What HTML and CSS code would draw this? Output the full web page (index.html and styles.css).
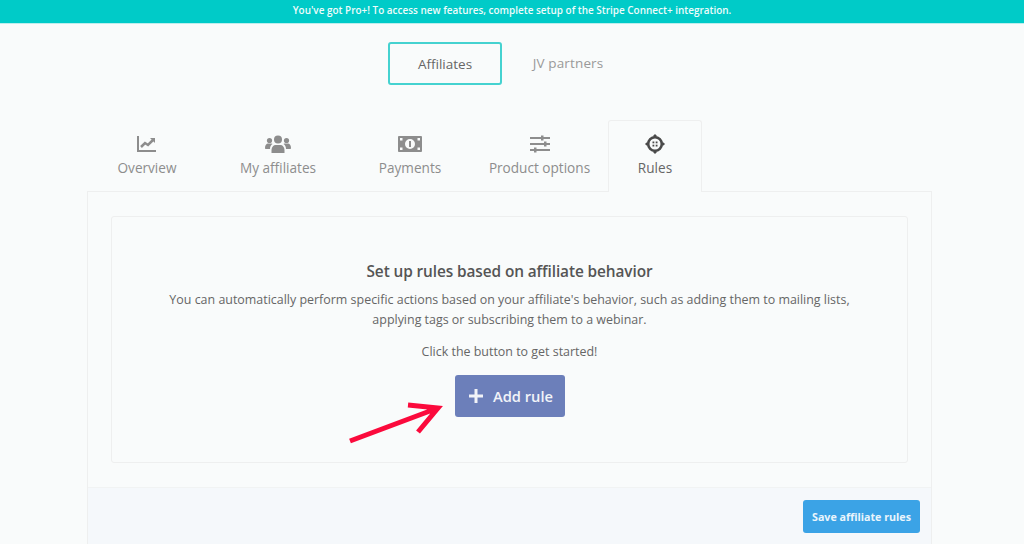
FILE: index.html
```html
<!DOCTYPE html>
<html lang="en">
  <head>
    <meta charset="UTF-8" />
    <meta name="viewport" content="width=device-width, initial-scale=1.0" />
    <title>Affiliate rules</title>
    <link rel="stylesheet" href="styles.css">
  </head>
  <body>
    <div class="banner">You've got Pro+! To access new features, complete setup of the Stripe Connect+ integration.</div>

    <div class="switcher">
      <a class="switch active">Affiliates</a>
      <a class="switch">JV partners</a>
    </div>

    <div class="tabs">
      <a class="tab">
        <svg class="tab-icon" viewBox="0 0 20 18">
          <path d="M1 1v15h18" fill="none" stroke="currentColor" stroke-width="2"/>
          <path d="M4 12l4-4 3 2 5-5" fill="none" stroke="currentColor" stroke-width="2.500"/>
          <path d="M13 3h5v5z" fill="currentColor"/>
        </svg>
        <span>Overview</span>
      </a>
      <a class="tab">
        <svg class="tab-icon" viewBox="0 0 26 18">
          <g fill="currentColor">
            <circle cx="13" cy="4.500" r="4"/>
            <circle cx="4.500" cy="5.500" r="2.600"/>
            <circle cx="21.500" cy="5.500" r="2.600"/>
            <path d="M6.500 18v-3c0-3 2-5 4-5h5c2 0 4 2 4 5v3z"/>
            <path d="M0 13c0-3 1.500-4.500 3-4.500h3.500c.5 0 1 .2 1 .5-1.500 1-2.500 2.500-2.500 5H1c-.6 0-1-.4-1-1z"/>
            <path d="M26 13c0-3-1.500-4.500-3-4.500h-3.500c-.5 0-1 .2-1 .5 1.500 1 2.500 2.500 2.500 5H25c.6 0 1-.4 1-1z"/>
          </g>
        </svg>
        <span>My affiliates</span>
      </a>
      <a class="tab">
        <svg class="tab-icon" viewBox="0 0 24 18">
          <path fill="currentColor" fill-rule="evenodd" d="M1 1h22c.5 0 1 .5 1 1v14c0 .5-.5 1-1 1H1c-.5 0-1-.5-1-1V2c0-.5.5-1 1-1zm11 3a5 5 0 1 0 0 10 5 5 0 0 0 0-10zM2 3v2.500h2.500V3zm17.500 0v2.500H22V3zM2 12.500V15h2.500v-2.500zm17.500 0V15H22v-2.500z"/>
          <rect x="11" y="6" width="2" height="6" fill="currentColor"/>
        </svg>
        <span>Payments</span>
      </a>
      <a class="tab">
        <svg class="tab-icon" viewBox="0 0 20 18">
          <g fill="currentColor">
            <rect y="2" width="20" height="2"/>
            <rect y="8" width="20" height="2"/>
            <rect y="14" width="20" height="2"/>
            <rect x="11" y="0.500" width="2.500" height="5"/>
            <rect x="14" y="6.500" width="2.500" height="5"/>
            <rect x="4" y="12.500" width="2.500" height="5"/>
          </g>
        </svg>
        <span>Product options</span>
      </a>
      <a class="tab current">
        <svg class="tab-icon target" viewBox="0 0 20 20">
          <circle cx="10" cy="10" r="6.800" fill="none" stroke="currentColor" stroke-width="2.600"/>
          <g fill="currentColor">
            <path d="M8.500 4V1.500L10 0l1.500 1.500V4z"/>
            <path d="M8.500 16v2.500L10 20l1.500-1.500V16z"/>
            <path d="M4 8.500H1.500L0 10l1.500 1.500H4z"/>
            <path d="M16 8.500h2.500L20 10l-1.500 1.500H16z"/>
            <rect x="7.500" y="7.500" width="1.800" height="1.800"/>
            <rect x="10.700" y="7.500" width="1.800" height="1.800"/>
            <rect x="7.500" y="10.700" width="1.800" height="1.800"/>
            <rect x="10.700" y="10.700" width="1.800" height="1.800"/>
          </g>
        </svg>
        <span>Rules</span>
      </a>
    </div>

    <div class="panel">
      <div class="panel-body">
        <div class="empty-box">
          <h2>Set up rules based on affiliate behavior</h2>
          <p>You can automatically perform specific actions based on your affiliate's behavior, such as adding them to mailing lists,<br>applying tags or subscribing them to a webinar.</p>
          <p class="hint">Click the button to get started!</p>
          <button class="add-btn">
            <svg class="plus" viewBox="0 0 14 14"><path d="M7 0v14M0 7h14" stroke="currentColor" stroke-width="3"/></svg>
            <span>Add rule</span>
          </button>
        </div>
      </div>
      <div class="panel-footer">
        <button class="save-btn">Save affiliate rules</button>
      </div>
    </div>

    <svg class="arrow" viewBox="0 0 100 44" width="100" height="44">
      <path d="M1 41L89 8M59 5l30 3-20 24" fill="none" stroke="#fb0a3c" stroke-width="5"/>
    </svg>
  </body>
</html>
```

FILE: styles.css
```css
html, body {
  height: 544px;
  overflow: hidden;
}
body {
  position: relative;
  margin: 0;
  background-color: #f9fbfb;
  color: #555;
  font-family: "Open Sans", "Noto Sans", sans-serif;
  font-size: 13px;
}
.banner {
  height: 23px;
  line-height: 21px;
  background: #00cbc8;
  border-bottom: 1px solid #bdeeed;
  color: #eefcfb;
  font-size: 9.950px;
  font-weight: 600;
  text-align: center;
}
.switcher {
  display: flex;
  justify-content: center;
  gap: 9px;
  margin-top: 18px;
  padding-right: 11px;
  height: 43px;
}
.switch {
  width: 114px;
  box-sizing: border-box;
  line-height: 43px;
  font-size: 13.500px;
  letter-spacing: 0.15px;
  text-align: center;
  color: #999;
}
.switch.active {
  border: 2px solid #45d2d0;
  border-radius: 3px;
  line-height: 40px;
  letter-spacing: 0;
  color: #666;
}
.tabs {
  display: grid;
  grid-template-columns: 120px 142px 122px 137px 94px;
  margin: 35px 0 0 87px;
  height: 71px;
}
.tab {
  display: flex;
  flex-direction: column;
  align-items: center;
  box-sizing: border-box;
  padding-top: 15px;
  color: #8d8d8d;
  font-size: 13.600px;
}
.tab span {
  margin-top: 5px;
  line-height: 20px;
}
.tab-icon {
  height: 18px;
  width: 26px;
}
.tab.current {
  position: relative;
  z-index: 1;
  height: 72px;
  padding-top: 14px;
  border: 1px solid #eeefef;
  border-bottom: none;
  border-radius: 3px 3px 0 0;
  background: #f9fbfb;
  color: #666;
}
.tab.current .tab-icon {
  color: #4a4a4a;
}
.tab-icon.target {
  height: 20px;
  margin: -1px 0 -1px;
}
.panel {
  width: 845px;
  box-sizing: border-box;
  margin-left: 87px;
  border: 1px solid #eeefef;
  border-bottom: none;
}
.panel-body {
  padding: 24px 23px;
  border-bottom: 1px solid #f1f3f3;
}
.empty-box {
  height: 247px;
  box-sizing: border-box;
  padding-top: 44px;
  border: 1px solid #eeefef;
  border-radius: 3px;
  text-align: center;
}
.empty-box h2 {
  margin: 0 0 7px;
  font-size: 15.400px;
  line-height: 22px;
  font-weight: 600;
  color: #555;
  letter-spacing: -0.1px;
}
.empty-box p {
  margin: 0;
  font-size: 12.450px;
  line-height: 20px;
  color: #666;
}
.empty-box p.hint {
  margin-top: 12px;
}
.add-btn {
  display: flex;
  align-items: center;
  justify-content: center;
  gap: 10px;
  width: 110px;
  height: 42px;
  margin: 13px auto 0;
  padding: 0 0 0 3px;
  border: none;
  border-radius: 3px;
  background: #6c7fba;
  color: #f1f3f8;
  font-family: inherit;
  font-size: 14.700px;
  font-weight: 600;
}
.plus {
  width: 14px;
  height: 14px;
}
.panel-footer {
  display: flex;
  justify-content: flex-end;
  height: 60px;
  box-sizing: border-box;
  padding: 12px 11px 0 0;
  background: #f5f8fb;
}
.save-btn {
  width: 117px;
  height: 33px;
  padding: 0;
  border: none;
  border-radius: 3px;
  background: #3ba3e6;
  color: #eaf5fc;
  font-family: inherit;
  font-size: 10.700px;
  font-weight: 700;
}
.arrow {
  position: absolute;
  left: 349px;
  top: 400px;
}
```
